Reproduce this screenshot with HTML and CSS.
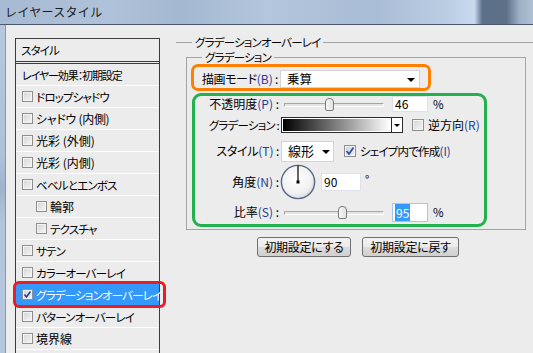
FILE: index.html
```html
<!DOCTYPE html>
<html lang="ja">
<head>
<meta charset="utf-8">
<title>レイヤースタイル</title>
<link rel="stylesheet" href="styles.css">
</head>
<body>
<div class="win">
  <div class="titlebar"><span class="title">レイヤースタイル</span></div>
  <div class="frame">
    <div class="edge"></div>
    <div class="body">
      <div class="sidebar">
        <div class="side-head">スタイル</div>
        <div class="side-row plain">レイヤー効果：初期設定</div>
        <div class="side-row"><span class="cb"></span>ドロップシャドウ</div>
        <div class="side-row mid"><span class="cb"></span>シャドウ (内側)</div>
        <div class="side-row k"><span class="cb"></span>光彩 (外側)</div>
        <div class="side-row k"><span class="cb"></span>光彩 (内側)</div>
        <div class="side-row"><span class="cb"></span>ベベルとエンボス</div>
        <div class="side-row sub k"><span class="cb"></span>輪郭</div>
        <div class="side-row sub"><span class="cb"></span>テクスチャ</div>
        <div class="side-row"><span class="cb"></span>サテン</div>
        <div class="side-row"><span class="cb"></span>カラーオーバーレイ</div>
        <div class="side-row sel"><span class="cb on"><svg width="9" height="9" viewBox="0 0 9 9"><path d="M1.5 4.5 L3.5 7 L7.5 1.5" fill="none" stroke="#2b3f86" stroke-width="1.6"/></svg></span>グラデーションオーバーレイ</div>
        <div class="side-row"><span class="cb"></span>パターンオーバーレイ</div>
        <div class="side-row k"><span class="cb"></span>境界線</div>
      </div>
      <div class="main">
        <fieldset class="group">
          <legend class="group-title">グラデーションオーバーレイ</legend>
          <fieldset class="inner">
            <legend class="inner-title">グラデーション</legend>
            <div class="mark-orange">
              <span class="blend-label">描画モード<span class="mn">(B)</span> :</span>
              <div class="select blend"><span>乗算</span><i class="arrow"></i></div>
            </div>
            <div class="mark-green">
              <div class="row r-opacity">
                <span class="lbl k">不透明度<span class="mn">(P)</span> :</span>
                <div class="slider"><div class="track"></div><div class="thumb" style="left:41px"></div></div>
                <div class="num">46</div>
                <span class="unit">%</span>
              </div>
              <div class="row r-grad">
                <span class="lbl">グラデーション :</span>
                <div class="gradbar"><div class="gradfill"></div></div>
                <div class="gradbtn"><i class="arrow small"></i></div>
                <span class="cb big"></span>
                <span class="cb-text k">逆方向<span class="mn">(R)</span></span>
              </div>
              <div class="row r-style">
                <span class="lbl mid">スタイル<span class="mn">(T)</span> :</span>
                <div class="select style"><span>線形</span><i class="arrow"></i></div>
                <span class="cb big on"><svg width="10" height="10" viewBox="0 0 10 10"><path d="M1.5 5 L4 8 L8.5 1.5" fill="none" stroke="#2f4fa8" stroke-width="1.8"/></svg></span>
                <span class="cb-text">シェイプ内で作成<span class="mn">(I)</span></span>
              </div>
              <div class="row r-angle">
                <span class="lbl k">角度<span class="mn">(N)</span> :</span>
                <svg class="dial" width="36" height="36" viewBox="0 0 36 36">
                  <defs>
                    <radialGradient id="dg" cx="45%" cy="40%" r="65%">
                      <stop offset="0" stop-color="#ffffff"/>
                      <stop offset="0.7" stop-color="#f1f1f1"/>
                      <stop offset="1" stop-color="#cfd3da"/>
                    </radialGradient>
                  </defs>
                  <circle cx="18" cy="18" r="16.6" fill="url(#dg)" stroke="#56668a" stroke-width="1.4"/>
                  <line x1="18" y1="18" x2="18" y2="1.5" stroke="#000" stroke-width="1.2"/>
                  <rect x="16.5" y="16.5" width="3" height="3" fill="#000"/>
                </svg>
                <div class="num angle">90</div>
                <span class="deg">°</span>
              </div>
              <div class="row r-ratio">
                <span class="lbl k">比率<span class="mn">(S)</span> :</span>
                <div class="slider"><div class="track"></div><div class="thumb" style="left:54px"></div></div>
                <div class="num focus"><span class="hl">95</span></div>
                <span class="unit">%</span>
              </div>
            </div>
          </fieldset>
          <div class="buttons">
            <button class="btn b1">初期設定にする</button>
            <button class="btn b2">初期設定に戻す</button>
          </div>
        </fieldset>
      </div>
    </div>
  </div>
</div>
</body>
</html>
```

FILE: styles.css
```css
* { box-sizing: border-box; }
html, body { margin: 0; padding: 0; }
body {
  width: 533px;
  height: 353px;
  overflow: hidden;
  background: #ececec;
  font-family: "Noto Sans CJK JP", "Noto Sans", sans-serif;
  font-size: 11.5px;
  letter-spacing: -0.8px;
  line-height: 16px;
  color: #000;
  font-feature-settings: "palt";
}
.k { font-size: 12px; letter-spacing: 0; }
.mid { font-size: 12px; letter-spacing: -0.3px; }
.win { width: 533px; height: 353px; display: flex; flex-direction: column; overflow: hidden; }

.titlebar {
  height: 25px;
  flex: none;
  border-bottom: 1px solid #4a5869;
  background: linear-gradient(90deg, #a7bad3 0%, #b0c2d9 20%, #a4b8d1 34%, #b3c6dd 50%, #a9bcd5 70%, #bccee4 84%, #c9daef 89%, #5b6f88 90.5%, #5e7189 95%, #9fb1c7 97.5%, #b0c1d6 100%);
  display: flex;
  align-items: center;
  padding-left: 5px;
}
.title { font-size: 12px; color: #1b1b1b; letter-spacing: 0.3px; font-feature-settings: normal; }

.frame { flex: 1; display: flex; min-height: 0; overflow: hidden; }
.edge {
  width: 6px;
  flex: none;
  background: linear-gradient(180deg, #b6c8de, #aec1d9 40%, #9fb3cc 50%, #b3c5dc 60%, #b6c8de);
  border-right: 1px solid #8b97a6;
}
.body { flex: 1; display: flex; align-items: flex-start; min-width: 0; }

/* sidebar */
.sidebar {
  margin: 13px 0 0 9px;
  width: 145px;
  height: 330px;
  flex: none;
  border: 1px solid #3c3c3c;
  background: #ececec;
}
.side-head {
  height: 25px;
  padding: 3px 0 0 5px;
  border-bottom: 3px double #3c3c3c;
}
.side-row {
  position: relative;
  height: 22px;
  border-bottom: 1px solid #ffffff;
  display: flex;
  align-items: center;
  padding-left: 6px;
  white-space: nowrap;
}
.side-row.plain { padding-left: 6px; font-size: 11px; letter-spacing: -1.1px; }
.side-row.sub { padding-left: 20px; }
.side-row .cb { margin-right: 3px; }
.side-row.sel { background: #3399ff; color: #fff; }
.side-row.sel::after {
  content: "";
  position: absolute;
  left: -3px;
  right: -7px;
  top: -3px;
  bottom: -3px;
  border: 3px solid #ed1c24;
  border-radius: 6px;
}

.cb {
  width: 11px;
  height: 11px;
  flex: none;
  border: 1px solid #8f8f8f;
  background: linear-gradient(135deg, #d4d4d4, #f6f6f6);
  box-shadow: inset 0 0 0 1px #f4f4f4;
  display: inline-flex;
  align-items: center;
  justify-content: center;
}
.cb.on { background: linear-gradient(135deg, #c9d3e6, #eef2f8); }
.cb.big { width: 12px; height: 12px; }

/* main */
.main { flex: 1; padding: 9px 0 0 16px; min-width: 0; }
fieldset { margin: 0; min-width: 0; }
.group {
  padding: 0;
  border: none;
  border-top: 1px solid #a3a3a3;
}
.group-title { margin-left: 16px; padding: 0 3px; line-height: 16px; }
.inner {
  margin: -1px 0 0 10px;
  width: 340px;
  padding: 0 0 2px 4px;
  border: 1px solid #a3a3a3;
}
.inner-title { margin-left: 11px; padding: 0 3px; line-height: 16px; }

.mn { color: #1f3d93; letter-spacing: 0; }

.mark-orange {
  margin-top: -1px;
  width: 240px;
  height: 27px;
  border: 3px solid #ff7f00;
  border-radius: 7px;
  display: flex;
  align-items: center;
  justify-content: space-between;
  padding: 3px 8px 0 8px;
}
.blend-label { white-space: nowrap; font-size: 12px; letter-spacing: -0.4px; }
.select {
  background: #fff;
  border: 1px solid #d4d4d4;
  display: flex;
  align-items: center;
  justify-content: space-between;
  padding: 0 4px 0 6px;
  flex: none;
}
.select.blend { width: 140px; height: 18px; font-size: 12.5px; letter-spacing: 0; }
.select.style { width: 53px; height: 21px; margin-left: 2px; padding-right: 3px; font-size: 13px; letter-spacing: 0; }
.arrow {
  width: 0; height: 0;
  border-left: 4px solid transparent;
  border-right: 4px solid transparent;
  border-top: 4px solid #000;
  margin-top: 2px;
}
.arrow.small { border-left-width: 3px; border-right-width: 3px; border-top-width: 3px; margin-top: 0; }

.mark-green {
  margin: 2px 0 0 1px;
  width: 295px;
  height: 134px;
  border: 3px solid #22b14c;
  border-radius: 9px;
  display: flex;
  flex-direction: column;
}
.row { display: flex; align-items: center; }
.r-opacity { height: 16px; }
.r-grad { height: 26px; }
.r-style { height: 26px; }
.r-angle { height: 36px; }
.r-ratio { height: 24px; }
.lbl { width: 84px; flex: none; text-align: right; white-space: nowrap; }

.slider { position: relative; width: 100px; height: 13px; margin-left: 5px; flex: none; }
.track {
  position: absolute;
  left: 0; right: 0; top: 5px;
  height: 4px;
  border-top: 1px solid #a7a7a7;
  border-left: 1px solid #a7a7a7;
  border-bottom: 1px solid #fff;
  border-right: 1px solid #fff;
  background: #e4e4e4;
}
.thumb {
  position: absolute;
  top: 0;
  width: 9px;
  height: 13px;
  border: 1px solid #7c7c7c;
  border-radius: 4px 4px 2px 2px;
  background: linear-gradient(90deg, #f7f7f7, #e2e2e2);
}
.num {
  width: 36px;
  height: 16px;
  background: #fff;
  border: 1px solid #dde2ea;
  padding-left: 2px;
  line-height: 14px;
  margin-left: 8px;
  flex: none;
  font-size: 12px;
  letter-spacing: 0;
}
.r-ratio .num { height: 19px; line-height: 17px; }
.num.focus { border-color: #a9c6e8; }
.hl { background: #3399ff; color: #fff; padding: 0 1px; }
.unit { margin-left: 5px; letter-spacing: 0; }

.gradbar {
  margin-left: 2px;
  width: 111px;
  height: 16px;
  border: 1px solid #2a2a2a;
  padding: 1px;
  background: #fff;
  flex: none;
}
.gradfill { width: 100%; height: 100%; background: linear-gradient(90deg, #000, #fff); }
.gradbtn {
  width: 11px;
  height: 16px;
  border: 1px solid #2a2a2a;
  border-left: none;
  background: #fff;
  display: flex;
  align-items: center;
  justify-content: center;
  flex: none;
}
.r-grad .cb { margin-left: 9px; }
.r-style .cb { margin-left: 10px; }
.cb-text { margin-left: 4px; white-space: nowrap; }

.dial { margin-left: 1px; flex: none; }
.num.angle { width: 40px; height: 18px; line-height: 16px; margin-left: 5px; }
.deg { margin-left: 4px; margin-top: -6px; }

.buttons { display: flex; gap: 11px; margin-top: 7px; padding-left: 81px; }
.btn {
  font: inherit;
  font-size: 12px;
  letter-spacing: -0.3px;
  font-feature-settings: "palt";
  height: 20px;
  padding: 0;
  border: 1px solid #707070;
  border-radius: 3px;
  background: linear-gradient(180deg, #f3f3f3 0%, #ebebeb 48%, #dddddd 52%, #cfcfcf 100%);
  color: #000;
  line-height: 18px;
}
.b1 { width: 94px; }
.b2 { width: 97px; }
```
